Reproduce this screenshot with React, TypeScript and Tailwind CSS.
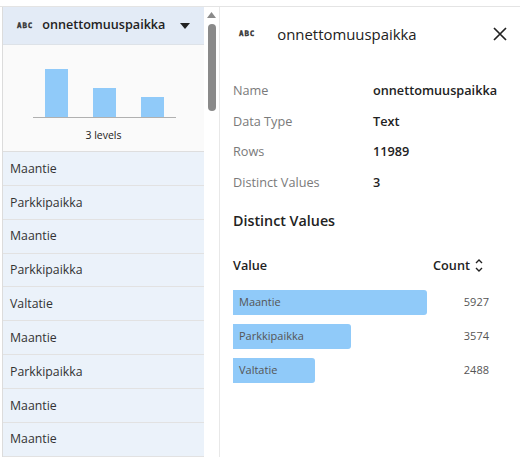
import React from "react";

function Abc({ className = "" }: { className?: string }) {
  return (
    <span className={`font-['DejaVu_Sans_Mono'] font-bold text-[7.5px] leading-none tracking-[0.9px] text-[#333] [-webkit-text-stroke:0.35px_#333] ${className}`}>ABC</span>
  );
}

const rows = ["Maantie", "Parkkipaikka", "Maantie", "Parkkipaikka", "Valtatie", "Maantie", "Parkkipaikka", "Maantie", "Maantie"];
const info = [
  ["Name", "onnettomuuspaikka"],
  ["Data Type", "Text"],
  ["Rows", "11989"],
  ["Distinct Values", "3"],
];
const dist: [string, number, number][] = [
  ["Maantie", 194, 5927],
  ["Parkkipaikka", 118, 3574],
  ["Valtatie", 82, 2488],
];

export default function App() {
  return (
    <div className="w-[520px] h-[457px] overflow-hidden bg-white pt-[6px] font-['Open_Sans',sans-serif] text-[#222]">
      <div className="h-[451px] border-t border-[#e4e4e4] flex">
        <div className="w-[3px] h-[500px] shrink-0 border-r border-[#dcdcdc]" />
        <div className="w-[201px] shrink-0 flex flex-col">
          <div className="h-[38px] shrink-0 bg-[#e3ebf6] border-b border-[#dde2e8] flex items-center pl-[14px] pr-[14px]">
            <Abc className="mt-[1px]" />
            <span className="ml-[9px] text-[12.6px] font-semibold flex-1">onnettomuuspaikka</span>
            <svg width="10" height="6" viewBox="0 0 10 6"><path d="M0 0h10L5 6z" fill="#222" /></svg>
          </div>
          <div className="h-[107px] shrink-0 bg-[#fafafa] border-b border-[#dedede] flex flex-col items-center">
            <svg width="201" height="75" viewBox="0 0 201 75" className="shrink-0">
              <rect x="42" y="24" width="23" height="48" fill="#90caf9" />
              <rect x="90" y="43" width="23" height="29" fill="#90caf9" />
              <rect x="138" y="52" width="23" height="20" fill="#90caf9" />
              <rect x="30" y="72" width="143" height="1" fill="#b0b0b0" />
            </svg>
            <span className="text-[10.5px] leading-[14px] mt-[8px]">3 levels</span>
          </div>
          {rows.map((r, i) => (
            <div key={i} className="h-[33.85px] shrink-0 bg-[#ebf2fa] border-b border-[#e2e2e2] flex items-center pl-[7px] pt-[1px] text-[12.3px] text-[#333]">
              {r}
            </div>
          ))}
        </div>
        <div className="w-[15px] shrink-0 flex flex-col items-center pt-[5px]">
          <svg width="9" height="6" viewBox="0 0 9 6" className="shrink-0"><path d="M0 6L4.5 0 9 6z" fill="#8a8a8a" /></svg>
          <div className="w-[8px] h-[87px] mt-[6px] rounded-full bg-[#8a8a8a]" />
        </div>
        <div className="flex-1 border-l border-[#e8e8e8] flex flex-col pl-[13px] pr-[12px]">
          <div className="h-[20px] mt-[17px] shrink-0 flex items-center">
            <Abc className="ml-[6px]" />
            <span className="ml-[22px] text-[14.9px] font-medium flex-1">onnettomuuspaikka</span>
            <svg width="16" height="16" viewBox="0 0 16 16"><path d="M2 2l12 12M14 2L2 14" stroke="#222" strokeWidth="1.7" /></svg>
          </div>
          <div className="mt-[31.5px] flex flex-col">
            {info.map(([k, v]) => (
              <div key={k} className="h-[30.6px] flex items-center text-[12.7px]">
                <span className="w-[140px] text-[#7a7a7a]">{k}</span>
                <span className="font-semibold text-[#222]">{v}</span>
              </div>
            ))}
          </div>
          <div className="mt-[13.5px] text-[14.3px] leading-[20px] font-semibold">Distinct Values</div>
          <div className="mt-[24px] h-[20px] flex items-center text-[12.7px] font-semibold">
            <span className="flex-1">Value</span>
            <span>Count</span>
            <svg width="10" height="15" viewBox="0 0 10 15" className="ml-[4px] mr-[24px]" fill="none" stroke="#222" strokeWidth="1.4"><path d="M2 5l3-3 3 3M2 10l3 3 3-3" /></svg>
          </div>
          <div className="mt-[15px] flex flex-col gap-[9px]">
            {dist.map(([n, w, c]) => (
              <div key={n} className="flex items-center h-[25px]">
                <div className="flex-1">
                  <div className="h-[25px] bg-[#90caf9] rounded-r-[3px] flex items-center pl-[6px] pb-[1px] text-[11px] text-[#555]" style={{ width: w }}>{n}</div>
                </div>
                <span className="w-[50px] pr-[19px] pb-[1px] text-right text-[11px] text-[#555] shrink-0">{c}</span>
              </div>
            ))}
          </div>
        </div>
      </div>
    </div>
  );
}
